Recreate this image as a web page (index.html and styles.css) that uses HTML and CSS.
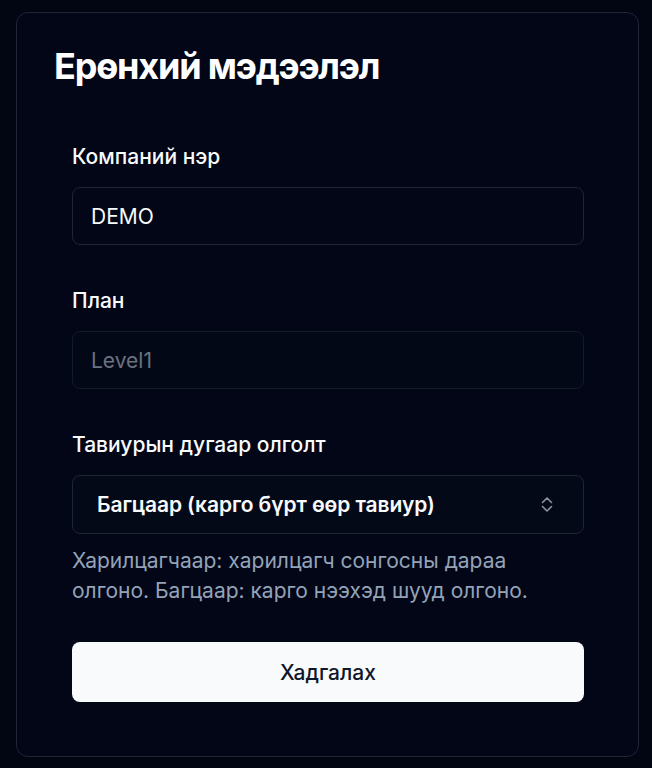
FILE: index.html
```html
<!DOCTYPE html>
<html lang="mn">
<head>
<meta charset="utf-8">
<title>Ерөнхий мэдээлэл</title>
<link rel="stylesheet" href="styles.css">
</head>
<body>
<section class="card">
  <h1 class="card-title">Ерөнхий мэдээлэл</h1>
  <form class="form">
    <div class="field">
      <label class="label" for="company">Компаний нэр</label>
      <input class="input" id="company" type="text" value="DEMO">
    </div>
    <div class="field">
      <label class="label" for="plan">План</label>
      <input class="input input-disabled" id="plan" type="text" value="Level1" disabled>
    </div>
    <div class="field field-select">
      <label class="label">Тавиурын дугаар олголт</label>
      <div class="select" role="combobox">
        <span class="select-value">Багцаар (карго бүрт өөр тавиур)</span>
        <svg class="select-icon" width="12" height="17" viewBox="0 0 12 17" fill="none" stroke="currentColor" stroke-width="1.6" stroke-linecap="round" stroke-linejoin="round"><path d="M1.5 6.5 6 2l4.5 4.5"/><path d="M1.5 10.5 6 15l4.5-4.5"/></svg>
      </div>
      <p class="hint">Харилцагчаар: харилцагч сонгосны дараа олгоно. Багцаар: карго нээхэд шууд олгоно.</p>
    </div>
    <button class="btn" type="button">Хадгалах</button>
  </form>
</section>
</body>
</html>
```
FILE: styles.css
```css
* { box-sizing: border-box; }
html, body { margin: 0; padding: 0; }
body {
  background: #020512;
  font-family: Inter, "Noto Sans", sans-serif;
  color: #f8fafc;
  padding: 12px 13px 12px 16px;
}
.card {
  border: 1px solid #1f2635;
  border-radius: 12px;
  background: #020617;
  padding: 35px 37px 53px 37px;
  min-height: 745px;
}
.card-title {
  margin: 0;
  font-size: 36px;
  line-height: 36px;
  font-weight: 700;
  letter-spacing: -1.2px;
  color: #ffffff;
}
.form {
  margin: 59px 17px 0 18px;
  display: flex;
  flex-direction: column;
}
.field {
  display: flex;
  flex-direction: column;
  margin-bottom: 42px;
}
.field-select { margin-bottom: 36px; }
.label {
  font-size: 21px;
  line-height: 28px;
  font-weight: 500;
  color: #f8fafc;
  margin-bottom: 16px;
}
.input {
  height: 58px;
  border: 1px solid #1e2533;
  border-radius: 8px;
  background: #020617;
  color: #f8fafc;
  font-family: inherit;
  font-size: 21px;
  padding: 0 18px;
  outline: none;
}
.input-disabled {
  color: #6b7280;
  border-color: #151b28;
  background: #030816;
}
.select {
  height: 59px;
  border: 1px solid #1e2533;
  border-radius: 8px;
  background: #040918;
  display: flex;
  align-items: center;
  justify-content: space-between;
  padding: 0 30px 0 24px;
}
.select-value {
  font-size: 21px;
  font-weight: 600;
  letter-spacing: -0.1px;
  color: #f8fafc;
}
.select-icon { color: #8b93a3; }
.hint {
  margin: 12px 0 0 0;
  font-size: 21px;
  line-height: 30px;
  color: #94a3b8;
}
.btn {
  height: 60px;
  border: none;
  border-radius: 8px;
  background: #f8fafc;
  color: #0f172a;
  font-family: inherit;
  font-size: 21px;
  font-weight: 500;
}
```
